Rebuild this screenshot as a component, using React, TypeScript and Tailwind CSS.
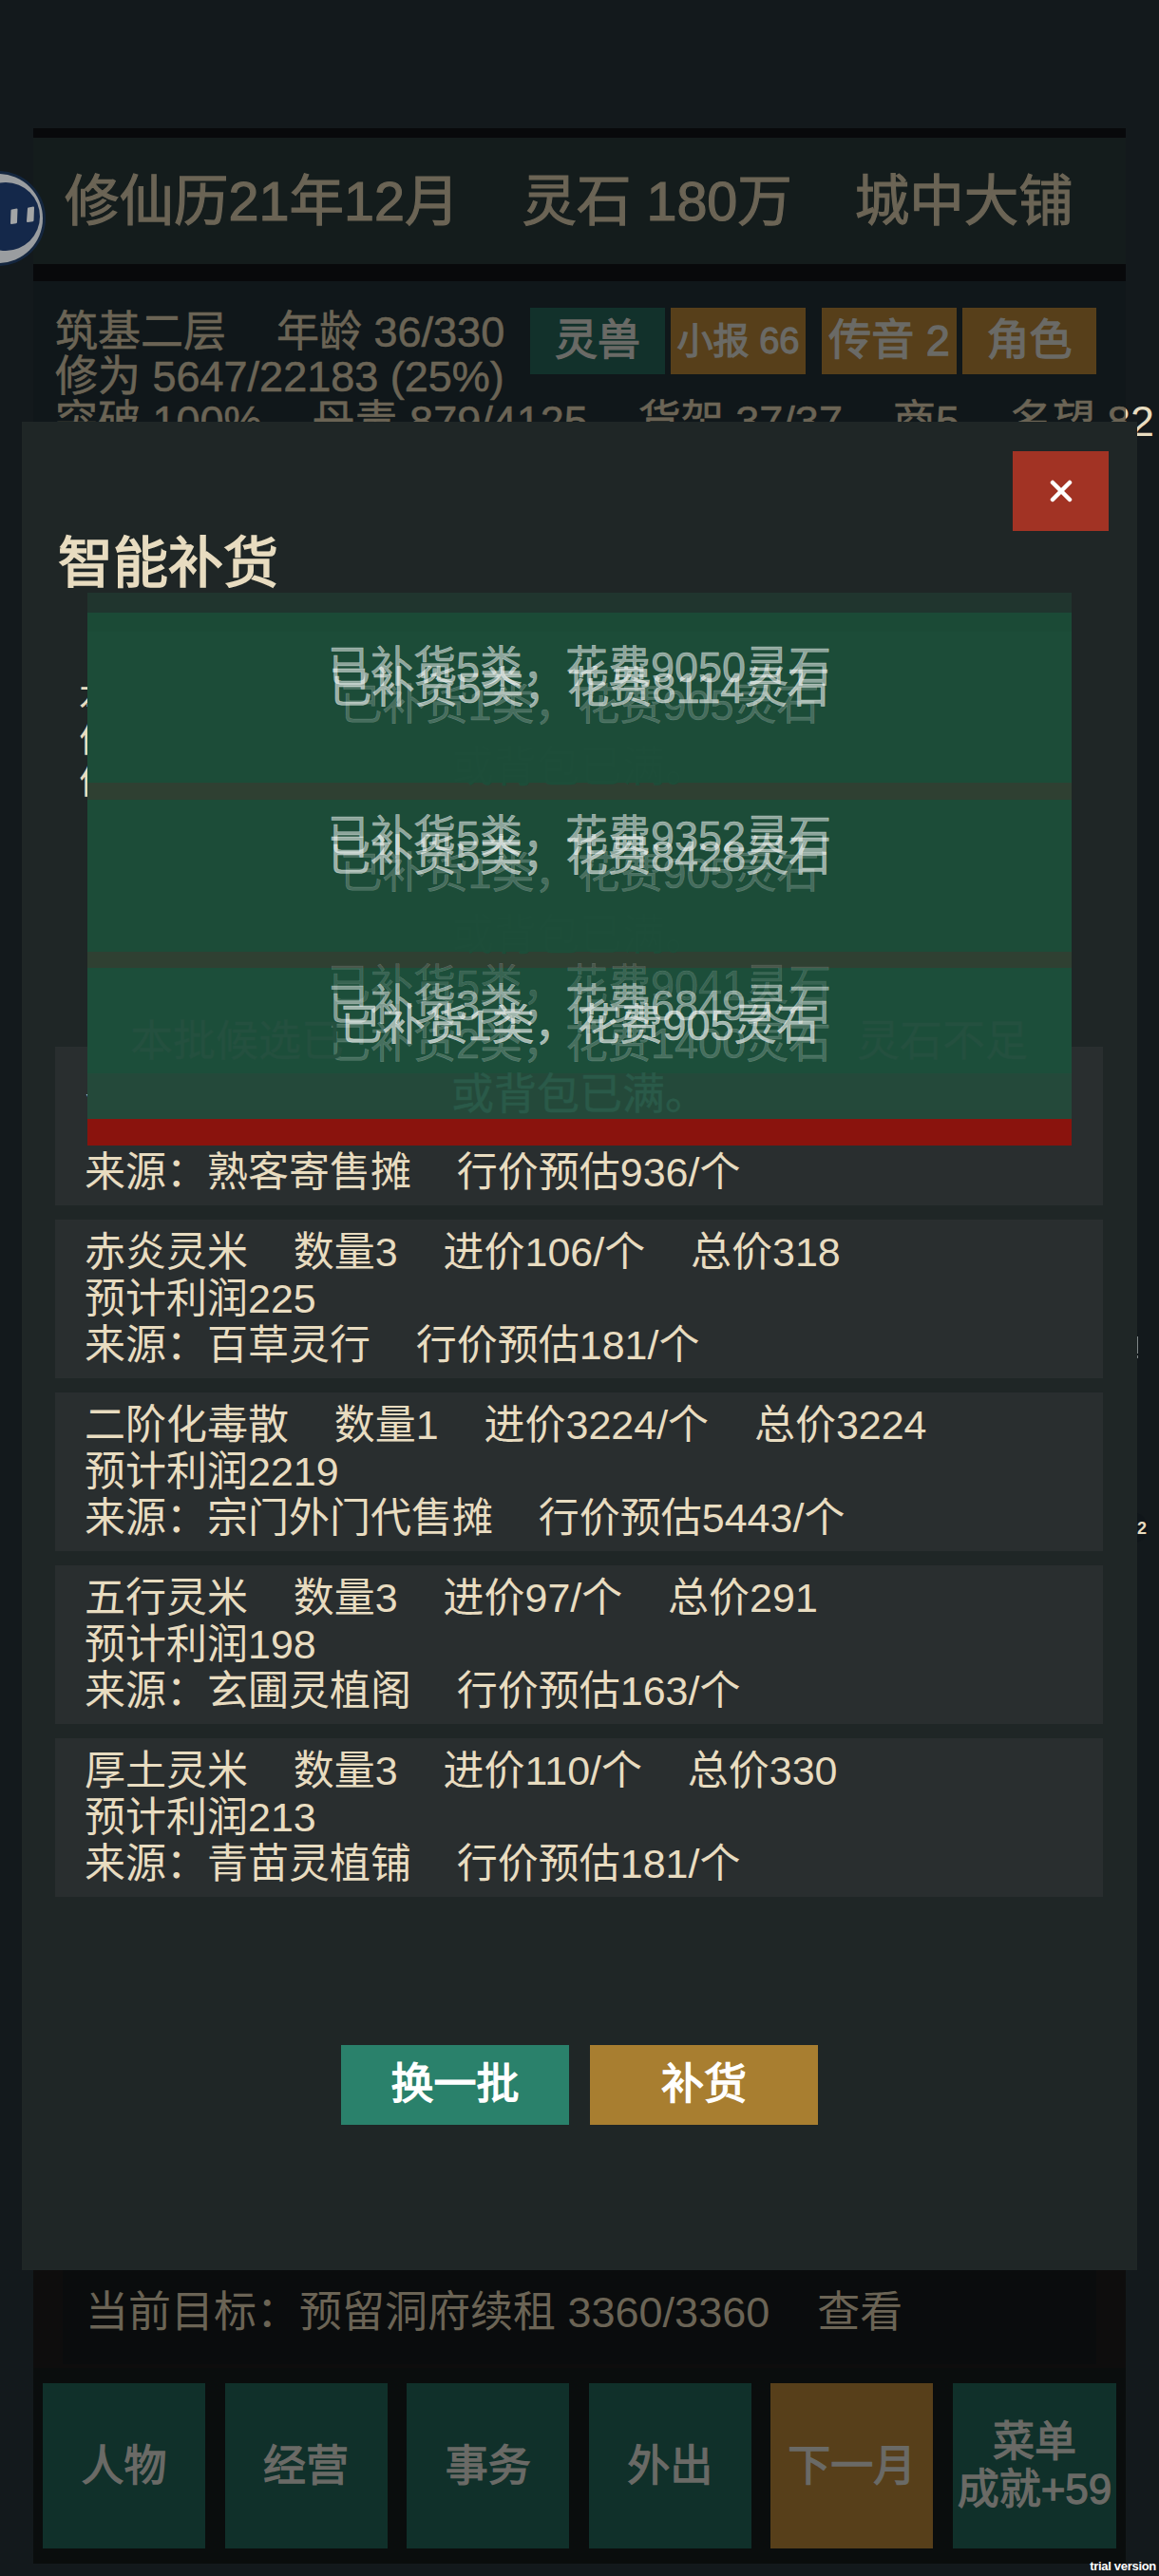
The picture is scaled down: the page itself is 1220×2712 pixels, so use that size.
import { X } from 'lucide-react';

const navItems = ['人物', '经营', '事务', '外出'];

const goods = [
  { name: '灵', line1: '', profit: '', source: '来源：熟客寄售摊\u00a0\u00a0\u00a0\u00a0行价预估936/个' },
  { name: '赤炎灵米', line1: '数量3\u00a0\u00a0\u00a0\u00a0进价106/个\u00a0\u00a0\u00a0\u00a0总价318', profit: '预计利润225', source: '来源：百草灵行\u00a0\u00a0\u00a0\u00a0行价预估181/个' },
  { name: '二阶化毒散', line1: '数量1\u00a0\u00a0\u00a0\u00a0进价3224/个\u00a0\u00a0\u00a0\u00a0总价3224', profit: '预计利润2219', source: '来源：宗门外门代售摊\u00a0\u00a0\u00a0\u00a0行价预估5443/个' },
  { name: '五行灵米', line1: '数量3\u00a0\u00a0\u00a0\u00a0进价97/个\u00a0\u00a0\u00a0\u00a0总价291', profit: '预计利润198', source: '来源：玄圃灵植阁\u00a0\u00a0\u00a0\u00a0行价预估163/个' },
  { name: '厚土灵米', line1: '数量3\u00a0\u00a0\u00a0\u00a0进价110/个\u00a0\u00a0\u00a0\u00a0总价330', profit: '预计利润213', source: '来源：青苗灵植铺\u00a0\u00a0\u00a0\u00a0行价预估181/个' },
];

const toastLines = [
  { text: '已补货5类，花费9050灵石', cls: 'top-[54px] text-white/50' },
  { text: '已补货5类，花费8114灵石', cls: 'top-[76px] text-white/55' },
  { text: '已补货1类，花费905灵石', cls: 'top-[94px] text-white/20' },
  { text: '或背包已满。', cls: 'top-[159px] text-[#1d4d39]' },
  { text: '已补货5类，花费9352灵石', cls: 'top-[232px] text-white/50' },
  { text: '已补货5类，花费8428灵石', cls: 'top-[253px] text-white/55' },
  { text: '已补货1类，花费905灵石', cls: 'top-[271px] text-white/20' },
  { text: '或背包已满。', cls: 'top-[336px] text-[#1d4d39]' },
  { text: '已补货5类，花费9041灵石', cls: 'top-[389px] text-white/15' },
  { text: '已补货3类，花费6849灵石', cls: 'top-[410px] text-white/45' },
  { text: '已补货1类，花费905灵石', cls: 'top-[431px] text-white/60' },
  { text: '已补货2类，花费1400灵石', cls: 'top-[450px] text-white/20' },
  { text: '或背包已满。', cls: 'top-[504px] text-[#2a5a49]' },
];

const Gap = () => <span className="inline-block w-[53px]" />;

const App = () => {
  return (
    <div className="relative h-[2712px] w-[1220px] overflow-hidden bg-[#13191c] font-['Liberation_Sans','Noto_Sans_CJK_SC',sans-serif] text-[43px] leading-[49px] text-[#e8dcc0]">
      {/* Dimmed game page */}
      <div className="ml-[35px] flex h-[2699px] w-[1150px] flex-col pt-[135px] text-[45px] text-[#6b6455]">
        <div className="h-[10px] bg-[#08090b]" />
        <div className="flex h-[133px] items-center gap-[66px] whitespace-pre bg-[#141c1c] pl-[33px] text-[57.5px] leading-[66px] [-webkit-text-stroke:1.2px_currentColor]">
          <span>修仙历21年12月</span>
          <span>灵石 180万</span>
          <span>城中大铺</span>
        </div>
        <div className="h-[18px] bg-[#08090b]" />

        <div className="min-h-0 flex-1 overflow-hidden bg-[#10171a] pl-[23px] pt-[30px] leading-[47px] [-webkit-text-stroke:0.6px_currentColor]">
          <div className="flex">
            <div className="w-[500px] whitespace-pre">
              <div>筑基二层<Gap />年龄 36/330</div>
              <div>修为 5647/22183 (25%)</div>
            </div>
            <div className="-mt-[2px] flex h-[70px] leading-[70px] text-[#6a6a66] [-webkit-text-stroke:1.3px_currentColor]">
              <div className="w-[142px] bg-[#12312b] text-center">灵兽</div>
              <div className="ml-[6px] w-[142px] bg-[#573f1a] text-center text-[38px]">小报 66</div>
              <div className="ml-[17px] w-[142px] bg-[#573f1a] text-center">传音 2</div>
              <div className="ml-[6px] w-[141px] bg-[#573f1a] text-center">角色</div>
            </div>
          </div>
          <div className="whitespace-pre">
            突破 100%<Gap />丹毒 879/4125<Gap />货架 37/37<Gap />商5<Gap />名望 82
          </div>
        </div>

        <div className="h-[103px] bg-[#0e0d0d] px-[31px] pb-[4px]">
          <div className="h-full bg-[#0a0c0d] pl-[24px] pt-[20px] whitespace-pre">
            当前目标：预留洞府续租 3360/3360{'\u00a0\u00a0\u00a0\u00a0'}查看
          </div>
        </div>

        <div className="flex h-[206px] justify-between bg-[#0a0d0d] px-[10px] py-[16px] text-[#6a6a66] [-webkit-text-stroke:1.3px_currentColor]">
          {navItems.map((item) => (
            <div key={item} className="flex w-[171px] items-center justify-center bg-[#10302a]">
              {item}
            </div>
          ))}
          <div className="flex w-[171px] items-center justify-center bg-[#573f1a]">下一月</div>
          <div className="flex w-[172px] flex-col items-center justify-center bg-[#10302a] text-[44px] leading-[50px] whitespace-nowrap">
            <span>菜单</span>
            <span>成就+59</span>
          </div>
        </div>
      </div>

      {/* Floating helper ball on the left edge */}
      <svg className="absolute left-0 top-[180px]" width="50" height="100" viewBox="0 180 50 100">
        <circle cx="-2" cy="230" r="50" fill="#14263f" />
        <circle cx="-2" cy="230" r="47" fill="#9a9da0" />
        <circle cx="6" cy="228" r="36" fill="#14284a" />
        <path d="M12.5 220.5 L17.5 219.5 Q18.5 219.5 18.5 220.5 L18 234 Q18 235 17 235.2 L12 236 Q11 236 11 235 L11.5 221.5 Q11.5 220.7 12.5 220.5 Z" fill="#a3a5a6" />
        <path d="M30 218.5 L35 217.5 Q36 217.5 36 218.5 L35.5 232 Q35.5 233 34.5 233.2 L29 234 Q28 234 28 233 L29 219.5 Q29 218.7 30 218.5 Z" fill="#a3a5a6" />
      </svg>

      {/* Bits of the page that stick out past the dim layer */}
      <div className="absolute left-[1185px] top-[419px] w-[35px] overflow-hidden whitespace-pre text-[45px]">
        <span className="-ml-[20px] inline-block">82</span>
      </div>
      <div className="absolute left-[1174px] top-[1592px] flex h-[33px] w-[34px] items-center justify-end rounded-full bg-[#10161a] pr-[1px] text-[18px] font-bold leading-none">
        2
      </div>
      <div className="absolute left-[1197px] top-[1407px] h-[18px] w-[1px] bg-[#7f8687]" />
      <div className="absolute left-[1197px] top-[1427px] h-[3px] w-[1px] bg-[#7f8687]" />

      {/* Restock dialog */}
      <div className="absolute left-[23px] top-[444px] flex h-[1946px] w-[1174px] flex-col bg-[#1f2626] pt-[31px]">
        <button className="mr-[30px] flex h-[84px] w-[101px] items-center justify-center self-end bg-[#a23324] text-white">
          <X size={36} strokeWidth={3} />
        </button>
        <h2 className="ml-[38px] mt-[4px] text-[58px] font-normal leading-[60px] [-webkit-text-stroke:1.6px_currentColor]">智能补货</h2>

        <div className="ml-[60px] mt-[89px] text-[38px] leading-[44px]">
          <div>本</div>
          <div>价</div>
          <div>价</div>
        </div>

        <div className="ml-[35px] mr-[36px] mt-[258px] flex flex-col gap-[15px]">
          {goods.map((g) => (
            <div key={g.source} className="h-[167px] whitespace-pre bg-[#292e2f] pl-[31px] pt-[10px]">
              <div>
                {g.name}
                {g.line1 ? '\u00a0\u00a0\u00a0\u00a0' + g.line1 : ''}
              </div>
              <div>{g.profit}&nbsp;</div>
              <div>{g.source}</div>
            </div>
          ))}
        </div>

        <div className="mt-[156px] flex justify-center gap-[22px] text-[45px] leading-[84px] text-white [-webkit-text-stroke:1.4px_currentColor]">
          <button className="h-[84px] w-[240px] bg-[#2a816b]">换一批</button>
          <button className="h-[84px] w-[240px] bg-[#a87e30]">补货</button>
        </div>
      </div>

      {/* Toast stack */}
      <div className="absolute left-[92px] top-[624px] w-[1036px] text-[45px] [-webkit-text-stroke:0.5px_currentColor]">
        <div className="h-[21px] bg-[#20352e]" />
        <div className="h-[20px] bg-[#1b4a36]" />
        <div className="h-[159px] bg-[#1c4c38]" />
        <div className="h-[18px] bg-[#2f4032]" />
        <div className="h-[160px] bg-[#1c4c38]" />
        <div className="h-[17px] bg-[#2f4032]" />
        <div className="h-[111px] bg-[#1c4e3a]" />
        <div className="h-[48px] bg-[#24493a]" />
        <div className="h-[28px] bg-[#8a130d]" />

        {toastLines.map((t) => (
          <div key={t.cls} className={`absolute inset-x-0 text-center leading-[50px] whitespace-pre ${t.cls}`}>
            {t.text}
          </div>
        ))}
        {/* the middle of this line can't be read under the other toasts */}
        <div className="absolute left-[45px] top-[448px] flex w-[945px] justify-between leading-[50px] text-[#24503f]">
          <span>本批候选已</span>
          <span>灵石不足</span>
        </div>
      </div>

      <div className="absolute bottom-[3px] right-[3px] text-[13px] font-bold leading-[14px] tracking-[-0.3px] text-white">
        trial version
      </div>
    </div>
  );
};

export default App;
